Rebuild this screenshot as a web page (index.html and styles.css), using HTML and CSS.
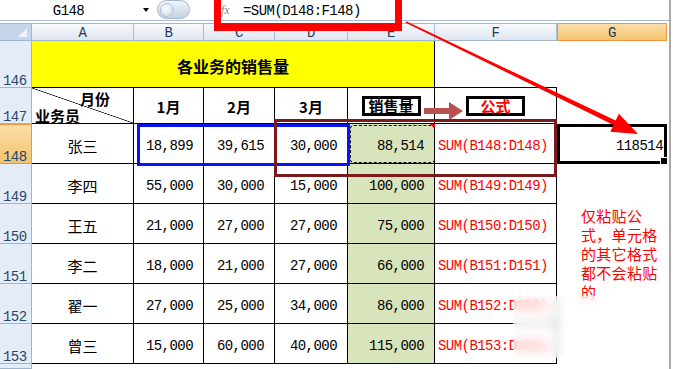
FILE: index.html
```html
<!DOCTYPE html>
<html lang="zh-CN">
<head>
<meta charset="utf-8">
<title>仅粘贴公式</title>
<link rel="stylesheet" href="styles.css">
</head>
<body>
<div class="window">
  <div class="app">
    <div class="fbar">
      <div class="namebox"><span class="name">G148</span><span class="dd"></span></div>
      <div class="pill"><span class="knob"></span></div>
      <div class="fx">fx</div>
      <div class="formula">=SUM(D148:F148)</div>
    </div>
    <div class="sheet">
      <div class="corner"></div>
      <div class="ch">A</div><div class="ch">B</div><div class="ch">C</div><div class="ch">D</div><div class="ch">E</div><div class="ch">F</div><div class="ch on">G</div><div class="x"></div>

      <div class="rh">146</div>
      <div class="title">各业务的销售量</div>
      <div class="fcap"></div><div></div><div></div>

      <div class="rh">147</div>
      <div class="c diag"><span class="mon">月份</span><span class="per">业务员</span></div>
      <div class="c hd">1月</div>
      <div class="c hd">2月</div>
      <div class="c hd">3月</div>
      <div class="c hd"><span class="lbl">销售量</span></div>
      <div class="c hd"><span class="lbl red">公式</span></div>
      <div></div><div></div>

      <div class="rh on">148</div>
      <div class="c nm">张三</div>
      <div class="c n">18,899</div>
      <div class="c n">39,615</div>
      <div class="c n">30,000</div>
      <div class="c n g mq">88,514</div>
      <div class="c f">SUM(B148:D148)</div>
      <div class="sel">118514</div><div></div>

      <div class="rh">149</div>
      <div class="c nm">李四</div>
      <div class="c n">55,000</div>
      <div class="c n">30,000</div>
      <div class="c n">15,000</div>
      <div class="c n g">100,000</div>
      <div class="c f">SUM(B149:D149)</div>
      <div></div><div></div>

      <div class="rh">150</div>
      <div class="c nm">王五</div>
      <div class="c n">21,000</div>
      <div class="c n">27,000</div>
      <div class="c n">27,000</div>
      <div class="c n g">75,000</div>
      <div class="c f">SUM(B150:D150)</div>
      <div class="note">仅粘贴公<br>式，单元格<br>的其它格式<br>都不会粘贴<br>的</div><div></div>

      <div class="rh">151</div>
      <div class="c nm">李二</div>
      <div class="c n">18,000</div>
      <div class="c n">21,000</div>
      <div class="c n">27,000</div>
      <div class="c n g">66,000</div>
      <div class="c f">SUM(B151:D151)</div>
      <div></div>

      <div class="rh">152</div>
      <div class="c nm">翟一</div>
      <div class="c n">27,000</div>
      <div class="c n">25,000</div>
      <div class="c n">34,000</div>
      <div class="c n g">86,000</div>
      <div class="c f">SUM(B152:D152)</div>
      <div></div>

      <div class="rh">153</div>
      <div class="c nm">曾三</div>
      <div class="c n">15,000</div>
      <div class="c n">60,000</div>
      <div class="c n">40,000</div>
      <div class="c n g">115,000</div>
      <div class="c f">SUM(B153:D153)</div>
      <div></div><div></div>

      <div class="rh"></div>
    </div>
  </div>
  <div class="edge"></div>
</div>

<div class="redbox"></div>
<div class="bluebox"></div>
<div class="maroonbox"></div>
<div class="blur"></div>
<svg class="arrows" width="673" height="369" viewBox="0 0 673 369">
  <polygon fill="#ff0000" points="406.35,21.28 615.7,120.45 618.9,113.7 638,134 610.3,131.7 613.5,124.95 405.65,22.72"/>
  <path fill="#b9514f" d="M424 108 H449 V102 L463 111 L449 120 V114 H424 Z"/>
</svg>
</body>
</html>
```

FILE: styles.css
```css
* { box-sizing: border-box; }
html, body { margin: 0; padding: 0; }
body {
  width: 673px;
  height: 369px;
  overflow: hidden;
  background: #fff;
  position: relative;
  font-family: "Liberation Mono", "Noto Sans CJK SC", monospace;
  color: #000;
}
.window { display: flex; height: 369px; padding-right: 2px; }
.app { flex: 1; display: flex; flex-direction: column; min-width: 0; }
.edge { width: 2px; background: #a8a8a8; }

/* formula bar */
.fbar {
  height: 21px;
  border-bottom: 1px solid #a9bcd3;
  margin-bottom: 2px;
  display: flex;
  align-items: center;
}
.namebox { width: 155px; height: 100%; display: flex; align-items: center; }
.name {
  width: 137px;
  text-align: center;
  font-size: 14px;
  letter-spacing: -0.55px;
  padding-top: 1px;
}
.dd {
  width: 0; height: 0;
  border-left: 3.5px solid transparent;
  border-right: 3.5px solid transparent;
  border-top: 4px solid #000;
  margin-left: 6px;
}
.pill {
  margin-left: 2px;
  width: 33px;
  height: 19px;
  align-self: flex-start;
  border-radius: 10px;
  border: 1px solid #a3b6cd;
  background: linear-gradient(#f1f5fa, #c4d2e3);
  display: flex;
  align-items: center;
  padding-left: 2px;
}
.knob {
  width: 14px; height: 14px;
  border-radius: 50%;
  background: radial-gradient(circle at 40% 35%, #ffffff, #dbe4ef 60%, #b9c9dc);
  border: 1px solid #b2c2d6;
}
.fx {
  margin-left: 31px;
  width: 10px;
  font-family: "Liberation Serif", serif;
  font-style: italic;
  font-size: 12px;
  color: #8a8a8a;
}
.formula {
  padding-left: 12px;
  font-size: 14px;
  letter-spacing: -0.55px;
  padding-top: 1px;
}

/* sheet grid */
.sheet {
  flex: 1;
  display: grid;
  grid-template-columns: 32px 102px 70px 71px 73px 87px 122px 110px 1fr;
  grid-template-rows: 18px 47px 36px repeat(6, 40px) 1fr;
  font-size: 14px;
  letter-spacing: -0.55px;
}
.corner {
  background: #c7d6ea;
  border-top: 1px solid #9eb6ce;
  border-right: 1px solid #9eb6ce;
  border-bottom: 1px solid #9eb6ce;
  position: relative;
}
.corner::after {
  content: "";
  position: absolute;
  right: 4px;
  bottom: 3px;
  width: 0; height: 0;
  border-style: solid;
  border-width: 0 0 9px 9px;
  border-color: transparent transparent #eef3f9 transparent;
}
.ch {
  background: linear-gradient(#f7f9fc, #dfe6ef);
  border-top: 1px solid #9eb6ce;
  border-right: 1px solid #a9bdd5;
  border-bottom: 1px solid #9eb6ce;
  color: #1f3b5c;
  text-align: center;
  padding-top: 2px;
  line-height: 14px;
}
.ch.on {
  background: linear-gradient(#fadea9, #f3c470);
  border: 1px solid #f29536;
}
.rh {
  background: #e4ecf7;
  border-right: 1px solid #9eb6ce;
  border-bottom: 1px solid #9eb6ce;
  color: #29476b;
  display: flex;
  align-items: flex-end;
  padding-left: 3px;
  line-height: 12px;
}
.rh.on {
  background: linear-gradient(#fadea9, #f3c470);
  border: 1px solid #f29536;
  border-left: 0;
}

.title {
  grid-column: span 5;
  background: #ffff00;
  border-right: 1px solid #000;
  border-bottom: 1px solid #000;
  display: flex;
  align-items: center;
  justify-content: center;
  padding-top: 3px;
  font-family: "Noto Sans CJK SC", sans-serif;
  font-weight: bold;
  font-size: 16px;
  letter-spacing: 0;
}
.fcap { border-bottom: 1px solid #000; }

.c {
  border-right: 1px solid #000;
  border-bottom: 1px solid #000;
  display: flex;
  align-items: center;
  white-space: nowrap;
}
.diag {
  flex-direction: column;
  align-items: stretch;
  justify-content: flex-start;
  padding-top: 2px;
  background: linear-gradient(to top right, transparent calc(50% - 0.7px), #000 50%, transparent calc(50% + 0.7px));
  font-family: "Noto Sans CJK SC", sans-serif;
  font-weight: bold;
  font-size: 15px;
  line-height: 17px;
  letter-spacing: 0;
}
.mon { align-self: flex-end; margin-right: 23px; }
.per { align-self: flex-start; margin-left: 3px; }
.hd {
  justify-content: center;
  font-family: "Noto Sans CJK SC", sans-serif;
  font-weight: bold;
  font-size: 15px;
  letter-spacing: 0;
  padding-top: 1px;
}
.lbl {
  width: 59px;
  height: 20px;
  border: 3px solid #000;
  background: #fff;
  text-align: center;
  line-height: 14px;
}
.lbl.red { color: #ff0000; }
.nm {
  justify-content: center;
  padding-top: 4px;
  font-family: "Noto Sans CJK SC", sans-serif;
  font-size: 15px;
  letter-spacing: 0;
}
.n {
  justify-content: flex-end;
  padding-right: 10px;
  padding-top: 4px;
}
.g { background: #d8e4bc; }
.mq { position: relative; }
.mq::after {
  content: "";
  position: absolute;
  left: 2px; top: 1px; right: -1px; bottom: 0;
  border: 1px dashed #000;
  border-radius: 4px;
}
.mq::before {
  content: "";
  position: absolute;
  right: -1px; top: 0;
  width: 0; height: 0;
  border-style: solid;
  border-width: 0 5px 5px 0;
  border-color: transparent #ff0000 transparent transparent;
}
.f {
  color: #ff0000;
  padding-left: 3px;
  padding-top: 4px;
}
.sel {
  border: 3px solid #000;
  display: flex;
  align-items: center;
  justify-content: flex-end;
  padding-right: 1px;
  padding-top: 4px;
  position: relative;
}
.sel::after {
  content: "";
  position: absolute;
  right: -4px;
  bottom: -4px;
  width: 6px;
  height: 6px;
  background: #000;
  border: 1px solid #fff;
}
.note {
  grid-row: span 3;
  color: #ff0000;
  font-family: "Noto Sans CJK SC", sans-serif;
  font-size: 15px;
  line-height: 19px;
  letter-spacing: 0.3px;
  padding: 2px 0 0 24px;
}

/* overlays */
.redbox {
  position: absolute;
  left: 214px;
  top: 0;
  width: 188px;
  height: 31px;
  border-style: solid;
  border-color: #ff0000;
  border-width: 0 7px 8px 7px;
}
.bluebox {
  position: absolute;
  left: 137px;
  top: 124px;
  width: 213px;
  height: 42px;
  border: 3px solid #0a14f0;
}
.maroonbox {
  position: absolute;
  left: 274px;
  top: 119px;
  width: 283px;
  height: 58px;
  border: 3px solid #7a1a1a;
}
.blur {
  position: absolute;
  left: 513px;
  top: 296px;
  width: 127px;
  height: 62px;
  background: rgba(255, 255, 255, 0.45);
  backdrop-filter: blur(5px);
}
.arrows {
  position: absolute;
  left: 0;
  top: 0;
}
```
